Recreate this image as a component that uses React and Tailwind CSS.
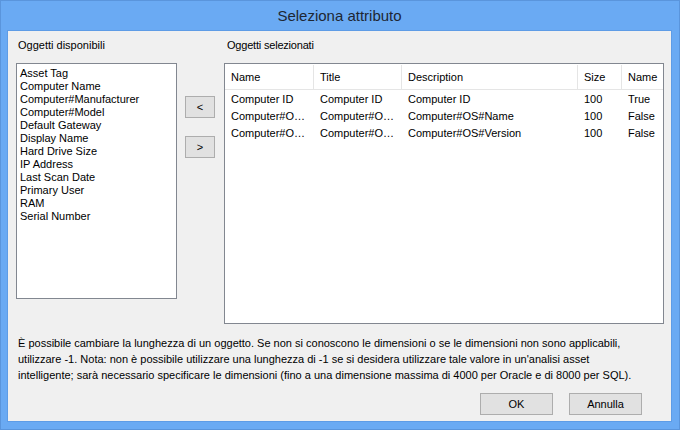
import React from "react";

const AVAILABLE = [
  "Asset Tag",
  "Computer Name",
  "Computer#Manufacturer",
  "Computer#Model",
  "Default Gateway",
  "Display Name",
  "Hard Drive Size",
  "IP Address",
  "Last Scan Date",
  "Primary User",
  "RAM",
  "Serial Number",
];

const ROWS = [
  { name: "Computer ID", title: "Computer ID", desc: "Computer ID", size: "100", flag: "True" },
  { name: "Computer#O…", title: "Computer#O…", desc: "Computer#OS#Name", size: "100", flag: "False" },
  { name: "Computer#O…", title: "Computer#O…", desc: "Computer#OS#Version", size: "100", flag: "False" },
];

// column widths match the header separators in the screenshot
const COLS = ["w-[89px]", "w-[88px]", "w-[176px]", "w-[44px]", "flex-1"];

function Btn({ children, className }) {
  return (
    <button
      className={`flex items-center justify-center border border-[#adadad] bg-[#e1e1e1] text-[11px] text-black ${className}`}
    >
      {children}
    </button>
  );
}

export default function App() {
  return (
    <div
      className="w-[680px] h-[430px] bg-[#6aaaf3] border border-[#5a95dc] flex flex-col pl-[6px] pr-[7px] pb-[7px]"
      style={{ fontFamily: '"Liberation Sans", Arial, sans-serif' }}
    >
      {/* Title bar */}
      <div className="h-[29px] flex items-center justify-center text-[15px] text-[#1e2733] pt-[1px]">
        Seleziona attributo
      </div>

      {/* Client area */}
      <div className="flex-1 bg-[#f0f0f0] border border-[#5e9ce6] flex flex-col text-[11px] text-black">
        <div className="flex pt-[8px] h-[293px]">
          {/* Left list */}
          <div className="flex flex-col pl-[8px]">
            <div className="pl-[2px] h-[24px] leading-[13px]">Oggetti disponibili</div>
            <div className="w-[161px] h-[236px] bg-white border border-[#828790] pl-[3px] pt-[3px] leading-[13px]">
              {AVAILABLE.map((a) => (
                <div key={a}>{a}</div>
              ))}
            </div>
          </div>

          {/* Move buttons */}
          <div className="flex flex-col gap-[18px] pl-[8px] pt-[57px] w-[47px]">
            <Btn className="w-[30px] h-[22px]">&lt;</Btn>
            <Btn className="w-[30px] h-[22px]">&gt;</Btn>
          </div>

          {/* Right table */}
          <div className="flex flex-col">
            <div className="pl-[3px] h-[24px] leading-[13px] tracking-[-0.2px]">Oggetti selezionati</div>
            <div className="w-[440px] h-[262px] bg-white border border-[#828790] flex flex-col">
              <div className="flex h-[26px] pt-[1px] border-b border-[#e5e5e5]">
                {["Name", "Title", "Description", "Size", "Name"].map((h, i) => (
                  <div
                    key={i}
                    className={`${COLS[i]} flex items-center pl-[6px] ${i < 4 ? "border-r border-[#e5e5e5]" : ""}`}
                  >
                    {h}
                  </div>
                ))}
              </div>
              <div className="pt-[1px]">
                {ROWS.map((r, i) => (
                  <div key={i} className="flex h-[17px] items-center">
                    {[r.name, r.title, r.desc, r.size, r.flag].map((v, j) => (
                      <div key={j} className={`${COLS[j]} pl-[6px] whitespace-nowrap`}>
                        {v}
                      </div>
                    ))}
                  </div>
                ))}
              </div>
            </div>
          </div>
        </div>

        {/* Note */}
        <div className="pl-[10px] pt-[11px] leading-[16px]">
          È possibile cambiare la lunghezza di un oggetto. Se non si conoscono le dimensioni o se le dimensioni non sono applicabili,
          <br />
          utilizzare -1. Nota: non è possibile utilizzare una lunghezza di -1 se si desidera utilizzare tale valore in un'analisi asset
          <br />
          intelligente; sarà necessario specificare le dimensioni (fino a una dimensione massima di 4000 per Oracle e di 8000 per SQL).
        </div>

        {/* Footer buttons */}
        <div className="flex justify-end gap-[16px] pr-[29px] mt-auto mb-[6px]">
          <Btn className="w-[73px] h-[22px]">OK</Btn>
          <Btn className="w-[73px] h-[22px]">Annulla</Btn>
        </div>
      </div>
    </div>
  );
}
